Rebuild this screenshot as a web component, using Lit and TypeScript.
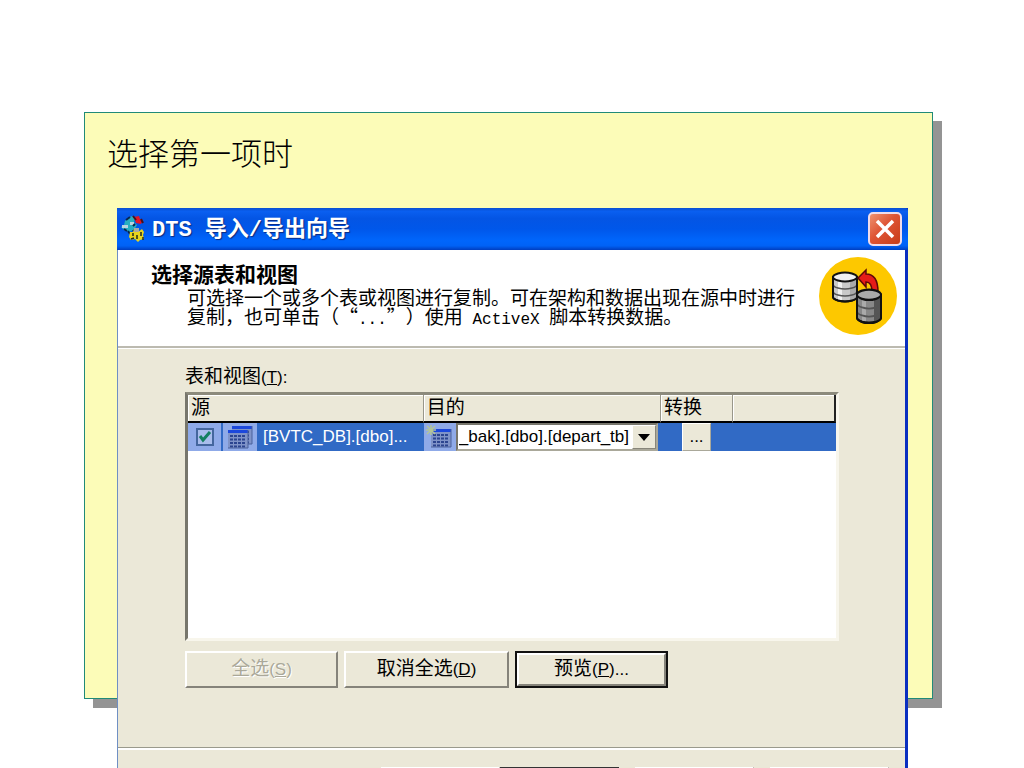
import { LitElement, html, css, svg } from "lit";
import { customElement, state } from "lit/decorators.js";

const cylinder = (x: number, y: number, stretch: number, light: string, mid: string, dark: string) => svg`
  <g transform="translate(${x} ${y}) scale(1 ${stretch})" stroke="#111" stroke-width="2">
    <path d="M1 5v20q0 2 5 3.500q7 2 14 0q5-1.500 5-3.500V5z" fill=${mid}/>
    <path d="M18 9v20q7-1 7-4V5z" fill=${dark} stroke="none"/>
    <path d="M6 9v19h4V9z" fill=${light} stroke="none"/>
    <path d="M1 12q0 3 5 4q7 2 14 0q5-1 5-4M1 19q0 3 5 4q7 2 14 0q5-1 5-4" fill="none" stroke="#555" stroke-width="1.500"/>
    <path d="M1 5v20q0 2 5 3.500q7 2 14 0q5-1.500 5-3.500V5" fill="none"/>
    <path d="M1 5q0-2 5-3.500q7-2 14 0q5 1.500 5 3.500t-5 3.500q-7 2-14 0q-5-1.500-5-3.500z" fill=${light}/>
  </g>`;

@customElement("app-root")
export class AppRoot extends LitElement {
  static styles = css`
    * { box-sizing: border-box; }
    :host {
      display: block;
      box-sizing: border-box;
      height: 100vh;
      overflow: hidden;
      background: #fff;
      padding: 112px 91px 69px 84px;
      font-family: "Liberation Sans", "Noto Sans CJK SC", sans-serif;
      color: #000;
    }
    .card {
      height: 100%;
      background: #fcfcb8;
      border: 1px solid #208a78;
      box-shadow: 9px 9px 0 #949494;
      padding: 19px 24px 0 32px;
    }
    .slide-title {
      margin: 0 0 36px -10px;
      font: 300 31px/40px "Noto Sans CJK SC", sans-serif;
    }
    .dialog {
      background: #ebe8d8;
      border-left: 1px solid #6f8fc4;
      border-right: 3px solid #0a2fc0;
    }
    .titlebar {
      display: flex;
      align-items: center;
      gap: 6px;
      height: 42px;
      margin: 0 -3px 0 -1px;
      padding: 0 6px 0 4px;
      border-radius: 0 3px 0 0;
      background: linear-gradient(#0a4fd0 0, #0a5ff0 8%, #0455e4 25%, #0057ea 50%, #0066fc 78%, #0062f6 90%, #003ec0 100%);
    }
    .titlebar h2 {
      flex: 1;
      margin: 0;
      padding-top: 3px;
      color: #fff;
      font: 700 22px/30px "Liberation Mono", "Noto Sans CJK SC", monospace;
      text-shadow: 1px 1px 1px #0b2a80;
      white-space: nowrap;
    }
    .close {
      display: grid;
      place-items: center;
      width: 34px;
      height: 34px;
      padding: 0;
      border: 2px solid #f0dcea;
      border-radius: 5px;
      background: linear-gradient(135deg, #ee9270, #de5434 45%, #c83c18);
    }
    .banner {
      display: flex;
      justify-content: space-between;
      height: 98px;
      padding: 7px 8px 0 33px;
      background: #fff;
      border-bottom: 2px solid #bcbab0;
    }
    .banner h3 {
      margin: 4px 0 0;
      font: 700 21px/24px "Noto Sans CJK SC", sans-serif;
    }
    .banner p {
      margin: 2px 0 0 36px;
      font: 400 19px/19px "Noto Sans CJK SC", sans-serif;
      text-spacing-trim: space-all;
    }
    .mono { font: 16px/19px "Liberation Mono", monospace; }
    .banner svg { flex: none; }
    .content { height: 400px; padding: 16px 66px 0 67px; border-bottom: 1px solid #9a9a8c; border-top: 1px solid #fff; }
    .caption { margin: 0; font-size: 19px; line-height: 24px; }
    .latin { font-size: 17px; }
    .list {
      height: 249px;
      margin-top: 2px;
      background: #fff;
      border: 3px solid;
      border-color: #8c8a7c #f8f6ec #f8f6ec #77766c;
    }
    table { width: 100%; table-layout: fixed; border-collapse: separate; border-spacing: 0; }
    .c1 { width: 36.4%; }
    .c2 { width: 36.6%; }
    .c3 { width: 11.1%; }
    th {
      height: 28px;
      padding: 0 0 0 3px;
      border-bottom: 2px solid #000;
      border-right: 1px solid #99978a;
      box-shadow: inset 1px 1px 0 #fff;
      background: #ebe8d8;
      text-align: left;
      font-weight: 400;
      font-size: 19px;
      line-height: 24px;
    }
    th:last-child { border-right: 2px solid #222; }
    td { height: 28px; padding: 0; background: #316ac5; color: #fff; }
    .cell { display: flex; align-items: center; height: 28px; font-size: 17px; }
    .tick { display: grid; place-items: center; width: 33px; height: 28px; background: #8faae8; margin-right: 2px; }
    .tick input {
      appearance: none;
      width: 18px;
      height: 18px;
      margin: 0;
      border: 2px solid #44669e;
      background: #a9bdec;
    }
    .tick input, .tick svg { grid-area: 1 / 1; }
    .tick svg { pointer-events: none; visibility: hidden; }
    .tick input:checked + svg { visibility: visible; }
    .icon { display: grid; place-items: center; width: 34px; height: 28px; background: #8faae8; flex: none; }
    .target { width: 32px; }
    .source { margin-left: 6px; white-space: nowrap; }
    .combo {
      display: grid;
      flex: 1;
      height: 28px;
      margin: 0 3px 0 0;
      border: 2px solid;
      border-color: #77766c #aaa89a #aaa89a #77766c;
      background: #fff;
      min-width: 0;
    }
    .combo select {
      grid-area: 1 / 1;
      appearance: none;
      width: 100%;
      min-width: 0;
      padding: 0 0 0 1px;
      border: 0;
      background: transparent;
      color: #000;
      font: 17px/22px "Liberation Sans", sans-serif;
    }
    .arrow {
      grid-area: 1 / 1;
      justify-self: end;
      display: grid;
      place-items: center;
      width: 24px;
      background: #ebe8d8;
      border: 1px solid;
      border-color: #fff #88867a #88867a #fff;
      pointer-events: none;
    }
    .more {
      width: 29px;
      height: 28px;
      margin-left: 21px;
      padding: 0;
      border: 1px solid;
      border-color: #fff #aaa89a #aaa89a #fff;
      background: #ebe8d8;
      color: #000;
      font: 17px/24px "Liberation Sans", sans-serif;
    }
    .actions { display: flex; gap: 6px; margin-top: 10px; }
    .btn {
      height: 37px;
      padding: 0;
      border: 2px solid;
      border-color: #fff #85837a #85837a #fff;
      background: #ebe8d8;
      color: #000;
      font: 19px/24px "Liberation Sans", "Noto Sans CJK SC", sans-serif;
    }
    .w1 { width: 153px; }
    .w2 { width: 165px; }
    .btn:disabled { color: #aaa899; text-shadow: 1px 1px 0 #fff; }
    .default { outline: 2px solid #111; outline-offset: -2px; border-width: 4px; }
    .footer { display: flex; justify-content: flex-end; gap: 16px; padding: 17px 16px 18px; border-top: 2px solid #fff; }
    .footer .btn { width: 119px; }
    .footer .first { margin-right: -16px; }
    .footer .next { border-color: #333; }
  `;

  @state() private selected = true;

  private tableIcon(extra: unknown) {
    return html`<svg width="28" height="24" viewBox="0 0 28 24" aria-hidden="true">${extra}</svg>`;
  }

  private grid(x: number, y: number) {
    return svg`<g transform="translate(${x} ${y})">
      <rect width="20" height="18" fill="#7f93c8"/>
      <rect width="20" height="3" fill="#1c48dc"/>
      <path d="M2 6h16M2 9.500h16M2 13h16M2 16.500h16" stroke="#2c4590" stroke-width="2" stroke-dasharray="3 1"/>
      <path d="M20 0v18H0" fill="none" stroke="#4b619c"/>
    </g>`;
  }

  render() {
    return html`
      <main class="card">
        <h1 class="slide-title">选择第一项时</h1>
        <section class="dialog" aria-label="DTS 导入/导出向导">
          <header class="titlebar">
            <svg width="25" height="28" viewBox="0 0 25 28" aria-hidden="true">
              <path d="M7 3l4-2 3 3-1 3 3 3-3 5-5 2-5-2-3-3 3-2 1-4z" fill="#27aec0"/>
              <path d="M1 10h6v3H1zM9 7h4v3H9z" fill="#b9d4df"/>
              <path d="M5 5l4-3M12 11l2-2M7 16l2 3M12 15l2 3M3 14l3 2" stroke="#092650" stroke-width="2"/>
              <path d="M13 2l5-1 1 3 3 1-2 4-5-1z" fill="#e31525"/>
              <path d="M12 1l3 4M20 4l2 4" stroke="#431320" stroke-width="2"/>
              <path d="M9 17l3 0 1-3h3l1 3 4-3 2 3-1 3 1 4-4 1-2 2-3-3-4 1-2-3z" fill="#e7d51c"/>
              <path d="M12 18v3M16 20v4M20 17v4M10 24l3-1M22 22v3" stroke="#222b1d" stroke-width="1.500"/>
              <path d="M13 13h5v4h-5z" fill="#a9a9a0"/>
            </svg>
            <h2>DTS 导入/导出向导</h2>
            <button class="close" aria-label="关闭">
              <svg width="24" height="24" viewBox="0 0 24 24" aria-hidden="true"><path d="M4 4l16 16M20 4L4 20" stroke="#fff" stroke-width="3.500"/></svg>
            </button>
          </header>
          <div class="banner">
            <div>
              <h3>选择源表和视图</h3>
              <p>可选择一个或多个表或视图进行复制。可在架构和数据出现在源中时进行<br>复制，也可单击（“<span class="mono">...</span>”）使用<span class="mono"> ActiveX </span>脚本转换数据。</p>
            </div>
            <svg width="78" height="78" viewBox="0 0 78 78" aria-hidden="true">
              <circle cx="39" cy="39" r="39" fill="#fdc800"/>
              ${cylinder(13, 15, 1, "#f0f0f0", "#c9c9c9", "#aaa")}
              <path d="M39 21l8-8v4q12 0 12 18h-6q0-10-6-10v5z" fill="#e51c18" stroke="#5c0808" stroke-width="1.500"/>
              ${cylinder(37, 32, 1.15, "#aaa", "#888", "#555")}
            </svg>
          </div>
          <div class="content">
            <p class="caption" id="tables">表和视图<span class="latin">(<u>T</u>):</span></p>
            <div class="list">
              <table aria-labelledby="tables">
                <colgroup><col class="c1"><col class="c2"><col class="c3"><col></colgroup>
                <thead><tr><th>源</th><th>目的</th><th>转换</th><th></th></tr></thead>
                <tbody><tr>
                  <td><div class="cell">
                    <label class="tick">
                      <input type="checkbox" aria-label="[BVTC_DB].[dbo]..." .checked=${this.selected}
                        @change=${(e: Event) => (this.selected = (e.target as HTMLInputElement).checked)}>
                      <svg width="14" height="14" viewBox="0 0 14 14" aria-hidden="true"><path d="M2 6l3 4 7-8" fill="none" stroke="#148060" stroke-width="3"/></svg>
                    </label>
                    <span class="icon">${this.tableIcon(svg`${this.grid(6, 1)}${this.grid(2, 5)}`)}</span>
                    <span class="source">[BVTC_DB].[dbo]...</span>
                  </div></td>
                  <td><div class="cell">
                    <span class="icon target">${this.tableIcon(svg`${this.grid(5, 4)}<path d="M1 1l8 8M9 1L1 9M5 0v10M0 5h10" stroke="#b4c596" stroke-width="1.500"/>`)}</span>
                    <span class="combo">
                      <select aria-label="目的"><option>_bak].[dbo].[depart_tb]</option></select>
                      <span class="arrow"><svg width="12" height="7" viewBox="0 0 12 7" aria-hidden="true"><path d="M0 0h12L6 7z"/></svg></span>
                    </span>
                  </div></td>
                  <td><div class="cell"><button class="more" aria-label="转换">...</button></div></td>
                  <td></td>
                </tr></tbody>
              </table>
            </div>
            <div class="actions">
              <button class="btn w1" disabled>全选<span class="latin">(<u>S</u>)</span></button>
              <button class="btn w2">取消全选<span class="latin">(<u>D</u>)</span></button>
              <button class="btn w1 default">预览<span class="latin">(<u>P</u>)...</span></button>
            </div>
          </div>
          <footer class="footer">
            <button class="btn first" aria-label="上一步"></button>
            <button class="btn next" aria-label="下一步"></button>
            <button class="btn" aria-label="取消"></button>
            <button class="btn" aria-label="帮助"></button>
          </footer>
        </section>
      </main>
    `;
  }
}
